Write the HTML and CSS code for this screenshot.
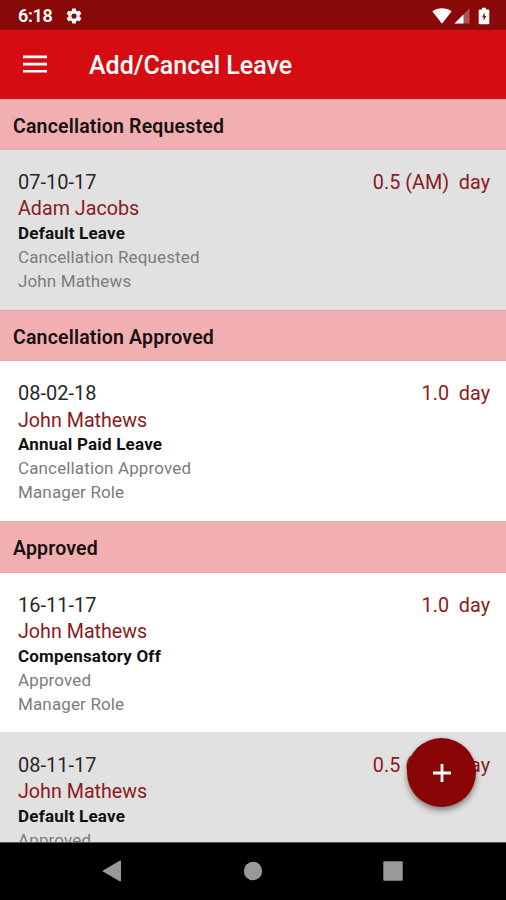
FILE: index.html
```html
<!DOCTYPE html>
<html lang="en">
<head>
<meta charset="utf-8">
<title>Add/Cancel Leave</title>
<link rel="stylesheet" href="styles.css">
</head>
<body>
<div class="screen">
  <div class="status">
    <span class="clock">6:18</span>
    <svg class="gear" width="18" height="18" viewBox="0 0 24 24"><path fill="#fff" fill-rule="evenodd" d="M19.4 13a7.500 7.500 0 0 0 0-2l2.200-1.700a.6.6 0 0 0 .1-.6l-2-3.500a.5.5 0 0 0-.6-.2l-2.500 1a7.300 7.300 0 0 0-1.700-1l-.4-2.600a.5.5 0 0 0-.5-.4h-4a.5.500 0 0 0-.5.4L9.100 5a8 8 0 0 0-1.700 1l-2.500-1a.5.500 0 0 0-.6.200l-2 3.500a.5.500 0 0 0 .1.600L4.600 11a8 8 0 0 0 0 2l-2.200 1.700a.5.5 0 0 0-.1.600l2 3.500c.1.200.4.300.6.200l2.500-1a7.300 7.300 0 0 0 1.700 1l.4 2.600c0 .2.200.4.500.4h4c.3 0 .5-.2.500-.4l.4-2.600a8 8 0 0 0 1.700-1l2.500 1c.2.100.5 0 .6-.2l2-3.500a.5.500 0 0 0-.1-.6zM12 15.500a3.500 3.500 0 1 1 0-7a3.500 3.500 0 0 1 0 7z"/></svg>
    <svg class="wifi" width="20" height="16" viewBox="0 0 20 16"><path fill="#fff" d="M.3 3.200C5.500-.8 14.500-.8 19.700 3.200L10.600 15q-.6.700-1.200 0z"/></svg>
    <svg class="signal" width="16" height="16" viewBox="0 0 16 16"><path fill="#fff" opacity=".3" d="M15.500.5V15.500H.5z"/><path fill="#fff" d="M9.500 6.500v9h-9z"/></svg>
    <svg class="battery" width="12" height="18" viewBox="0 0 12 18"><path fill="#fff" fill-rule="evenodd" d="M4 .7h4v1.800h2.200q1.100 0 1.100 1.100v12.600q0 1.100-1.100 1.100H1.800q-1.100 0-1.100-1.100V3.600q0-1.100 1.100-1.100H4zM6.700 5.500L4 10.300h1.700v3.700L8.200 9H6.700z"/></svg>
  </div>
  <header class="appbar">
    <svg class="menu" width="24" height="18" viewBox="0 0 24 18"><path fill="#fff" d="M0 .5h24v2.700H0zM0 7.700h24v2.700H0zM0 14.900h24v2.700H0z"/></svg>
    <h1 class="title">Add/Cancel Leave</h1>
  </header>
  <main class="list">
    <h2 class="section">Cancellation Requested</h2>
    <article class="item shaded">
      <div class="top"><span class="date">07-10-17</span><span class="days">0.5 (AM)&nbsp; day</span></div>
      <div class="name">Adam Jacobs</div>
      <div class="type">Default Leave</div>
      <div class="meta">Cancellation Requested</div>
      <div class="meta">John Mathews</div>
    </article>
    <h2 class="section">Cancellation Approved</h2>
    <article class="item">
      <div class="top"><span class="date">08-02-18</span><span class="days">1.0&nbsp; day</span></div>
      <div class="name">John Mathews</div>
      <div class="type">Annual Paid Leave</div>
      <div class="meta">Cancellation Approved</div>
      <div class="meta">Manager Role</div>
    </article>
    <h2 class="section">Approved</h2>
    <article class="item">
      <div class="top"><span class="date">16-11-17</span><span class="days">1.0&nbsp; day</span></div>
      <div class="name">John Mathews</div>
      <div class="type">Compensatory Off</div>
      <div class="meta">Approved</div>
      <div class="meta">Manager Role</div>
    </article>
    <article class="item shaded">
      <div class="top"><span class="date">08-11-17</span><span class="days">0.5 (AM)&nbsp; day</span></div>
      <div class="name">John Mathews</div>
      <div class="type">Default Leave</div>
      <div class="meta">Approved</div>
    </article>
  </main>
  <button class="fab" aria-label="Add leave"><svg width="18" height="18" viewBox="0 0 18 18"><path fill="#fff" d="M7.600 0h2.800v7.600H18v2.800h-7.600V18H7.600v-7.600H0V7.600h7.600z"/></svg></button>
  <nav class="navbar">
    <svg width="20" height="22" viewBox="0 0 20 22"><path fill="#999" d="M18 .5q1 0 1 1v19q0 1-1 1L1 11.500q-.8-.5 0-1z"/></svg>
    <svg width="20" height="20" viewBox="0 0 20 20"><circle cx="10" cy="10" r="9.200" fill="#999"/></svg>
    <svg width="20" height="20" viewBox="0 0 20 20"><rect x=".3" y=".3" width="19.400" height="19.400" rx="1" fill="#999"/></svg>
  </nav>
</div>
</body>
</html>
```
FILE: styles.css
```css
* { box-sizing: border-box; margin: 0; }
body { font-family: Roboto, "Liberation Sans", sans-serif; overflow: hidden; }
.screen { position: relative; display: flex; flex-direction: column; width: 506px; height: 900px; background: #fff; }
.status { display: flex; align-items: center; flex: none; height: 30px; padding: 1px 16px 0 18px; background: #890808; }
.clock { width: 47px; color: #fff; font-size: 18px; font-weight: 600; line-height: 30px; letter-spacing: -.3px; }
.wifi { margin-left: auto; }
.signal { margin-left: 2px; }
.battery { margin-left: 8px; }
.appbar { display: flex; align-items: center; flex: none; height: 68.600px; padding: 0 0 0 23px; background: #d50d12; }
.title { margin-left: 42px; padding-top: 3px; color: #fff; font-size: 25px; font-weight: 500; line-height: 32px; }
.list { flex: 1; min-height: 0; overflow: hidden; }
.section { height: 51.400px; padding: 2px 13px 0; border-bottom: 1px solid #eda9ab; background: #f2afb1; color: #171011; font-size: 19.500px; font-weight: 600; line-height: 51px; letter-spacing: .18px; white-space: nowrap; }
.shaded + .section { padding-top: 1px; border-top: 1px solid #d9a5a6; }
.item { height: 159.900px; padding: 19px 16px 0 18px; background: #fff; white-space: nowrap; }
.item.shaded { background: #e1e1e1; }
.item.shaded:last-child { padding-top: 19.500px; }
.top { display: flex; justify-content: space-between; height: 26.500px; font-size: 20px; line-height: 27px; }
.date { color: #282828; }
.days { color: #8a1a20; font-size: 19.800px; }
.name { height: 25.500px; color: #8a1a20; font-size: 19.700px; line-height: 27px; }
.type { height: 24px; color: #111; font-size: 17px; font-weight: 700; line-height: 24px; letter-spacing: .2px; }
.meta { height: 24px; color: #7c7c7c; font-size: 17px; line-height: 24px; letter-spacing: .14px; }
.fab { position: absolute; left: 407px; top: 738px; display: flex; align-items: center; justify-content: center; width: 69px; height: 69px; padding: 0; border: 0; border-radius: 50%; background: #890505; box-shadow: 0 4px 6px rgba(0,0,0,.35), 0 1px 4px rgba(0,0,0,.15); }
.navbar { display: flex; align-items: center; justify-content: space-between; flex: none; height: 58px; padding: 0 103px 2px 102px; background: #000; border-top: 1px solid #555; }
```
